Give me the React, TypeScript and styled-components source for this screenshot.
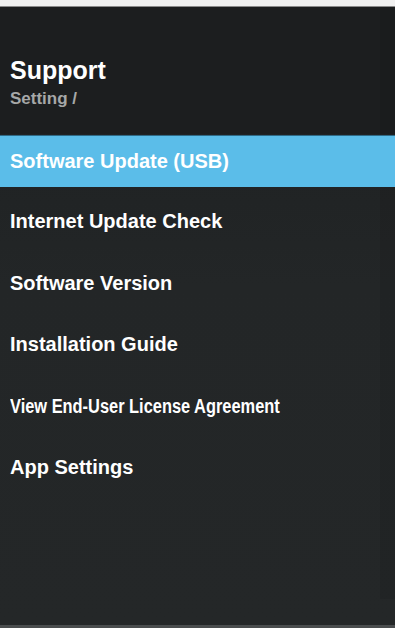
import React from "react";
import styled, { createGlobalStyle } from "styled-components";

const GlobalStyle = createGlobalStyle`
  html, body {
    margin: 0;
    padding: 0;
    background: #232627;
  }
  * {
    box-sizing: border-box;
  }
`;

const items = [
  { label: "Software Update (USB)", active: true },
  { label: "Internet Update Check" },
  { label: "Software Version" },
  { label: "Installation Guide" },
  { label: "View End-User License Agreement", narrow: true },
  { label: "App Settings" },
];

const App: React.FC = () => {
  return (
    <>
      <GlobalStyle />
      <Screen>
        <TopStrip />
        <Panel>
          <Header>
            <Title>Support</Title>
            <Crumb>Setting /</Crumb>
          </Header>
          <Menu>
            {items.map((item) => (
              <MenuItem key={item.label} $active={item.active}>
                <ItemLabel $narrow={item.narrow}>{item.label}</ItemLabel>
              </MenuItem>
            ))}
          </Menu>
          <EdgeShade />
        </Panel>
        <BottomLine />
      </Screen>
    </>
  );
};

export default App;

const Screen = styled.div`
  width: 395px;
  height: 628px;
  display: flex;
  flex-direction: column;
  background: #232627;
  font-family: "Liberation Sans", Arial, sans-serif;
  overflow: hidden;
`;

const TopStrip = styled.div`
  height: 7px;
  flex-shrink: 0;
  background: #f0f0f0;
  border-bottom: 1px solid #8a8a8a;
`;

const Panel = styled.div`
  position: relative;
  flex: 1;
  display: flex;
  flex-direction: column;
  background: linear-gradient(180deg, #1d1f20 0%, #202324 25%, #232627 45%, #242728 100%);
`;

const Header = styled.div`
  height: 127px;
  padding: 48px 10px 0;
  display: flex;
  flex-direction: column;
  background: #1c1e1f;
`;

const Title = styled.div`
  color: #ffffff;
  font-size: 25px;
  font-weight: bold;
  line-height: 30px;
`;

const Crumb = styled.div`
  margin-top: 4px;
  color: #a6a8a8;
  font-size: 17px;
  font-weight: bold;
  line-height: 20px;
`;

const Menu = styled.div`
  position: relative;
  z-index: 1;
  display: flex;
  flex-direction: column;
  padding-top: 1px;
`;

const MenuItem = styled.div<{ $active?: boolean }>`
  height: ${(p) => (p.$active ? "52px" : "61.5px")};
  margin-bottom: ${(p) => (p.$active ? "4px" : "0")};
  display: flex;
  align-items: center;
  padding: 0 10px;
  background: ${(p) => (p.$active ? "#5bbde9" : "transparent")};
  border-top: ${(p) => (p.$active ? "1px solid #2f6a86" : "none")};
`;

const ItemLabel = styled.span<{ $narrow?: boolean }>`
  display: inline-block;
  color: #ffffff;
  font-size: 20px;
  font-weight: bold;
  white-space: nowrap;
  transform: ${(p) => (p.$narrow ? "scaleX(0.82)" : "none")};
  transform-origin: left center;
`;

const EdgeShade = styled.div`
  position: absolute;
  top: 0;
  right: 0;
  width: 15px;
  height: 592px;
  background: rgba(0, 0, 0, 0.06);
  pointer-events: none;
`;

const BottomLine = styled.div`
  height: 3px;
  flex-shrink: 0;
  background: #4a4d4e;
`;
